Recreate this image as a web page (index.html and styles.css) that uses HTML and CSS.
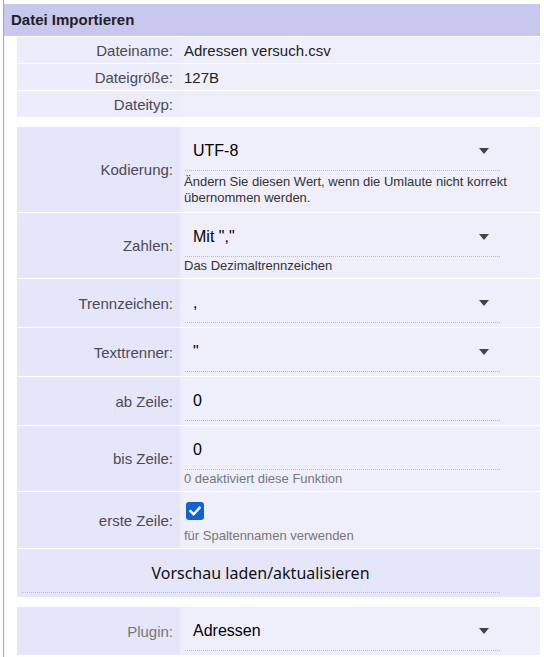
FILE: index.html
```html
<!DOCTYPE html>
<html lang="de">
<head>
<meta charset="utf-8">
<title>Datei Importieren</title>
<link rel="stylesheet" href="styles.css">
</head>
<body>
<div class="page">
  <div class="head">Datei Importieren</div>

  <div class="tbl info">
    <div class="row"><div class="lbl">Dateiname:</div><div class="val">Adressen versuch.csv</div></div>
    <div class="row"><div class="lbl">Dateigröße:</div><div class="val">127B</div></div>
    <div class="row"><div class="lbl">Dateityp:</div><div class="val"></div></div>
  </div>

  <div class="tbl form">
    <div class="row">
      <div class="lbl">Kodierung:</div>
      <div class="val">
        <div class="sel">UTF-8<span class="arrow"></span></div>
        <div class="help dark multi">Ändern Sie diesen Wert, wenn die Umlaute nicht korrekt übernommen werden.</div>
      </div>
    </div>
    <div class="row">
      <div class="lbl">Zahlen:</div>
      <div class="val">
        <div class="sel">Mit ","<span class="arrow"></span></div>
        <div class="help dark">Das Dezimaltrennzeichen</div>
      </div>
    </div>
    <div class="row">
      <div class="lbl">Trennzeichen:</div>
      <div class="val"><div class="sel">,<span class="arrow"></span></div></div>
    </div>
    <div class="row">
      <div class="lbl">Texttrenner:</div>
      <div class="val"><div class="sel">"<span class="arrow"></span></div></div>
    </div>
    <div class="row">
      <div class="lbl">ab Zeile:</div>
      <div class="val"><div class="sel">0</div></div>
    </div>
    <div class="row">
      <div class="lbl">bis Zeile:</div>
      <div class="val">
        <div class="sel">0</div>
        <div class="help">0 deaktiviert diese Funktion</div>
      </div>
    </div>
    <div class="row">
      <div class="lbl">erste Zeile:</div>
      <div class="val">
        <div class="checkwrap">
          <span class="check"><svg width="18" height="18" viewBox="0 0 18 18"><path d="M4.5 9.2 L7.6 12.2 L13.6 5.8" fill="none" stroke="#fff" stroke-width="2.4" stroke-linecap="square"/></svg></span>
        </div>
        <div class="help nogap">für Spaltennamen verwenden</div>
      </div>
    </div>
    <div class="row btnrow">
      <div class="btn">Vorschau laden/aktualisieren</div>
    </div>
  </div>

  <div class="tbl form">
    <div class="row">
      <div class="lbl light">Plugin:</div>
      <div class="val"><div class="sel">Adressen<span class="arrow"></span></div></div>
    </div>
  </div>
</div>
</body>
</html>
```

FILE: styles.css
```css
html, body {
  margin: 0;
  padding: 0;
  background: #fff;
}
body {
  font-family: "Liberation Sans", Arial, sans-serif;
  overflow: hidden;
}
.page {
  margin: 0 4px 0 3px;
  border-left: 1px solid #a9a9a9;
  min-height: 657px;
  padding-top: 4px;
}
.head {
  height: 32px;
  background: #c8c8ef;
  padding-left: 7px;
  font-weight: bold;
  font-size: 15px;
  line-height: 32px;
  color: #222;
}
.tbl {
  margin-left: 13px;
  display: flex;
  flex-direction: column;
  gap: 1px;
}
.info {
  padding-top: 1px;
}
.form {
  margin-top: 10px;
}
.row {
  display: flex;
}
.lbl {
  width: 163px;
  flex: none;
  box-sizing: border-box;
  padding-right: 7px;
  display: flex;
  align-items: center;
  justify-content: flex-end;
  background: #e6e6fb;
  color: #4a4a55;
  font-size: 15px;
}
.lbl.light {
  color: #777;
}
.val {
  flex: 1;
  background: #efeffc;
  color: #222;
  font-size: 15px;
}
.info .row {
  height: 26px;
}
.info .lbl {
  background: #ececfb;
}
.info .val {
  display: flex;
  align-items: center;
  padding-left: 4px;
  background: #efeffc;
}
.form .val {
  padding: 5px 0 4px 5px;
}
.sel {
  position: relative;
  width: 307px;
  height: 38px;
  padding-left: 8px;
  border-bottom: 1px dotted #b9b9dc;
  display: flex;
  align-items: center;
  font-size: 16px;
  color: #000;
}
.arrow {
  position: absolute;
  right: 11px;
  top: 16px;
  width: 0;
  height: 0;
  border-left: 5.5px solid transparent;
  border-right: 5.5px solid transparent;
  border-top: 6px solid #444;
}
.help {
  margin: 1px 0 0 -1px;
  font-size: 13px;
  line-height: 16px;
  color: #777;
}
.help.dark {
  color: #333;
}
.help.multi {
  margin-top: 3px;
  margin-bottom: 2px;
}
.help.nogap {
  margin-top: 0;
}
.checkwrap {
  height: 26px;
  padding-top: 5px;
}
.check {
  display: block;
  width: 18px;
  height: 18px;
  margin-left: 1px;
  border-radius: 3px;
  background: #0d62d6;
}
.check svg {
  display: block;
}
.btnrow {
  background: #e6e6fb;
  padding: 5px 40px 4px 4px;
}
.btn {
  flex: 1;
  height: 38px;
  border-bottom: 1px dotted #b9b9dc;
  display: flex;
  align-items: center;
  justify-content: center;
  font-family: "Noto Sans", "Open Sans", sans-serif;
  font-size: 16px;
  color: #111;
}
```
